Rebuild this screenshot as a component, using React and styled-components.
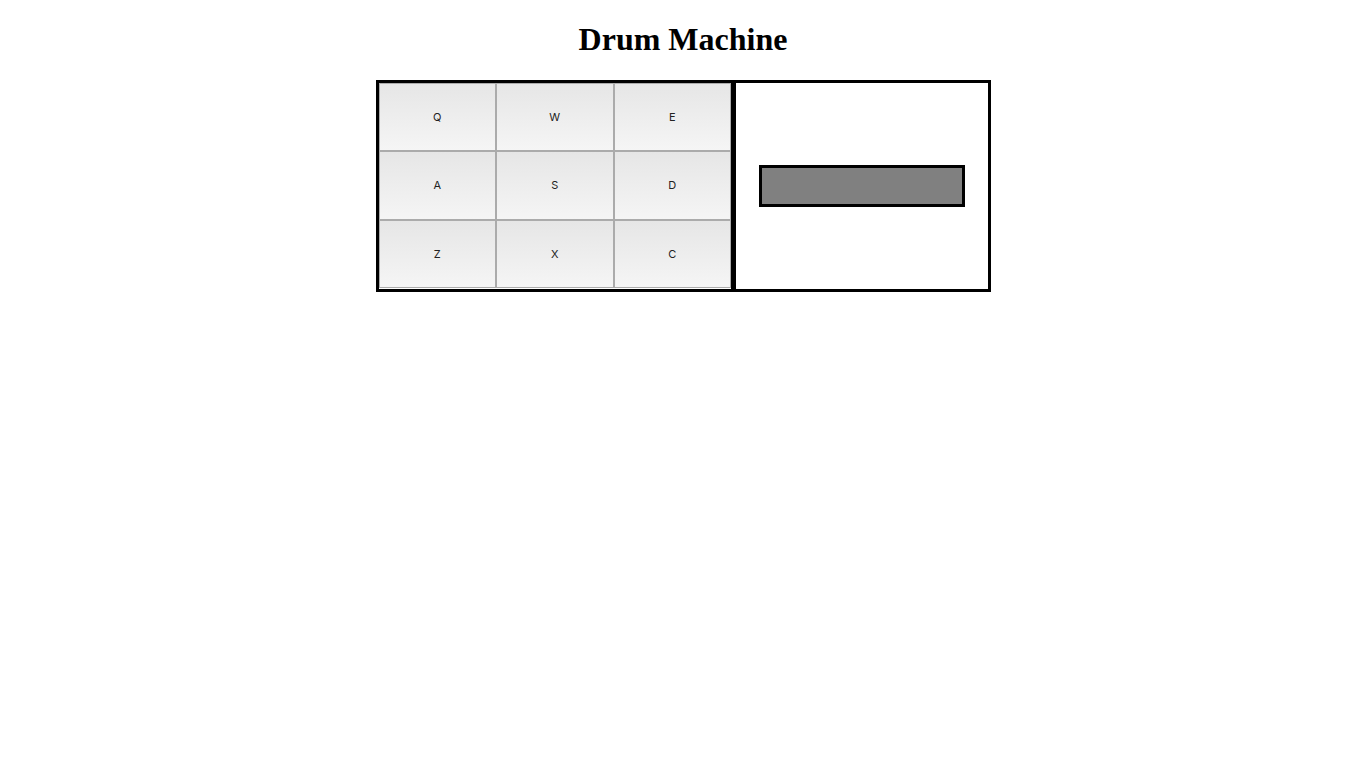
import React from "react"
import styled, { createGlobalStyle } from "styled-components"

const GlobalStyle = createGlobalStyle`
  body {
    margin: 0;
    padding: 0 8px;
    background: #fff;
    font-family: "Liberation Serif", "Times New Roman", serif;
  }
`

const Title = styled.h1`
  margin: 21.44px 0;
  font-size: 32px;
  font-weight: bold;
  text-align: center;
  color: #000;
`

const Machine = styled.div`
  display: flex;
  width: 609px;
  margin: 0 auto;
  border: 3px solid #000;
`

const PadGrid = styled.div`
  display: grid;
  grid-template-columns: repeat(3, 117.5px);
  grid-template-rows: 68px 69px 68px;
  align-self: flex-start;
`

const Pad = styled.button`
  margin: 0;
  padding: 0;
  border: 1px solid #ababab;
  background: linear-gradient(#e6e6e6, #f5f5f5);
  color: #222;
  font-family: Inter, "Liberation Sans", Arial, sans-serif;
  font-size: 11px;
  cursor: pointer;
`

const Display = styled.div`
  display: flex;
  align-items: center;
  justify-content: center;
  width: 251.5px;
  height: 206px;
  border-left: 5px solid #000;
`

const Screen = styled.div`
  width: 200px;
  height: 36px;
  border: 3px solid #000;
  background: #808080;
`

const keys = ["Q", "W", "E", "A", "S", "D", "Z", "X", "C"]

export default function App() {
  return (
    <>
      <GlobalStyle />
      <Title>Drum Machine</Title>
      <Machine>
        <PadGrid>
          {keys.map((k) => (
            <Pad key={k}>{k}</Pad>
          ))}
        </PadGrid>
        <Display>
          <Screen />
        </Display>
      </Machine>
    </>
  )
}
